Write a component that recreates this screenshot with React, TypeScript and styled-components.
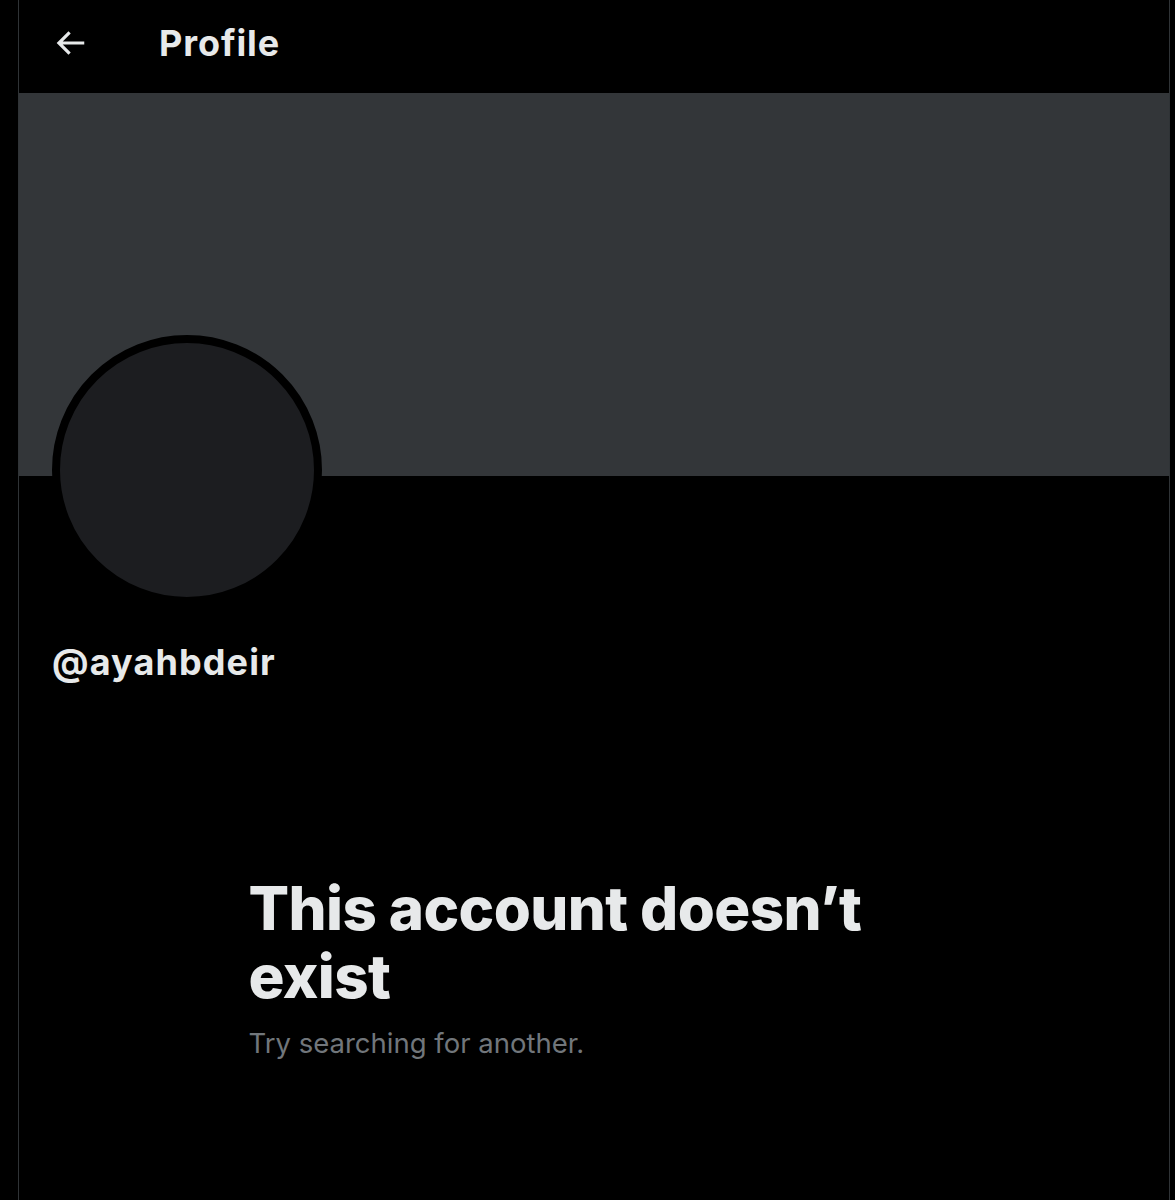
import React from "react";
import styled, { createGlobalStyle } from "styled-components";

const GlobalStyle = createGlobalStyle`
  html, body {
    margin: 0;
    padding: 0;
    background: #000;
  }
  body {
    font-family: Inter, "Noto Sans", "Liberation Sans", sans-serif;
    color: #e7e9ea;
  }
`;

const Page = styled.div`
  display: flex;
  min-height: 1200px;
  background: #000;
`;

const Column = styled.main`
  margin-left: 18px;
  width: 1150px;
  border-left: 1.5px solid #2f3336;
  border-right: 1.5px solid #2f3336;
  display: flex;
  flex-direction: column;
`;

const Header = styled.header`
  height: 93px;
  display: flex;
  align-items: center;
  padding-left: 32px;
  gap: 70px;
`;

const BackButton = styled.button`
  display: flex;
  align-items: center;
  justify-content: center;
  width: 38px;
  height: 38px;
  padding: 0;
  margin-top: -8px;
  background: none;
  border: none;
  color: #e7e9ea;
  cursor: pointer;
  svg {
    width: 38px;
    height: 38px;
    fill: currentColor;
  }
`;

const Title = styled.h2`
  margin: -8px 0 0 0;
  font-size: 36px;
  font-weight: 700;
  letter-spacing: 0.9px;
  color: #e7e9ea;
`;

const Banner = styled.div`
  height: 383px;
  background: #333639;
`;

const ProfileInfo = styled.div`
  padding-left: 33px;
  display: flex;
  flex-direction: column;
`;

const Avatar = styled.div`
  width: 254px;
  height: 254px;
  margin-top: -141px;
  border-radius: 50%;
  border: 8px solid #000;
  background: #1c1d20;
`;

const Handle = styled.div`
  margin-top: 35px;
  font-size: 36px;
  font-weight: 700;
  letter-spacing: 1.1px;
  color: #e7e9ea;
`;

const EmptyState = styled.section`
  width: 691px;
  margin: 190px auto 0;
`;

const Heading = styled.h1`
  margin: 0;
  font-size: 60px;
  line-height: 68px;
  font-weight: 800;
  letter-spacing: -0.6px;
  color: #e7e9ea;
`;

const Subtext = styled.p`
  margin: 14px 0 0 0;
  font-size: 27.5px;
  line-height: 38px;
  font-weight: 400;
  color: #71767b;
`;

function BackArrow() {
  return (
    <svg viewBox="0 0 24 24" aria-hidden="true">
      <path d="M7.414 13l5.043 5.04-1.414 1.42L3.586 12l7.457-7.46 1.414 1.42L7.414 11H21v2H7.414z" />
    </svg>
  );
}

export default function App() {
  return (
    <>
      <GlobalStyle />
      <Page>
        <Column>
          <Header>
            <BackButton aria-label="Back">
              <BackArrow />
            </BackButton>
            <Title>Profile</Title>
          </Header>
          <Banner />
          <ProfileInfo>
            <Avatar />
            <Handle>@ayahbdeir</Handle>
          </ProfileInfo>
          <EmptyState>
            <Heading>This account doesn’t exist</Heading>
            <Subtext>Try searching for another.</Subtext>
          </EmptyState>
        </Column>
      </Page>
    </>
  );
}
